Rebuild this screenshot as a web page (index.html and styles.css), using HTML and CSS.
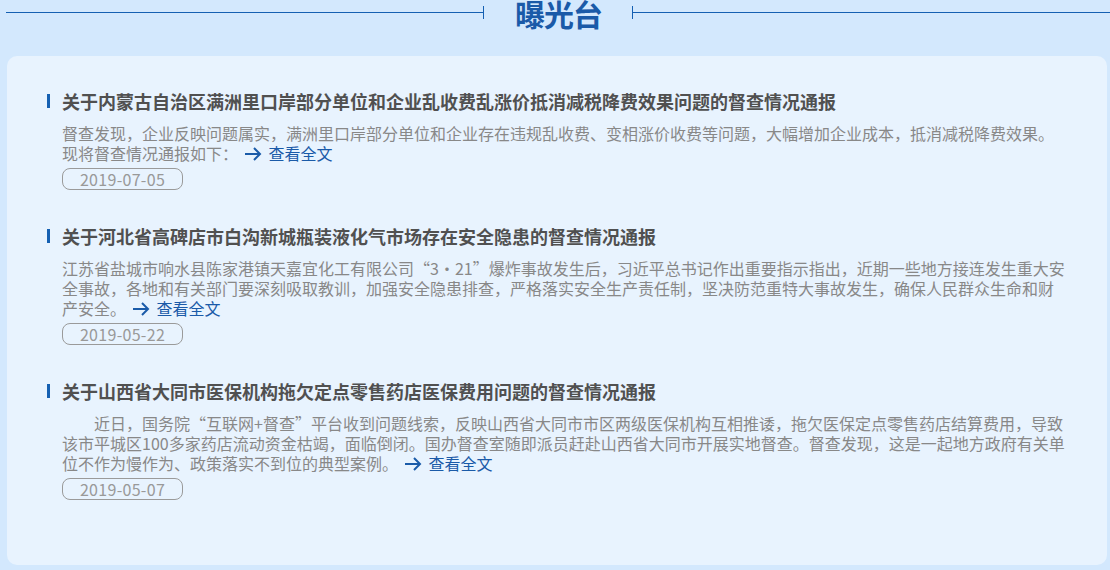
FILE: index.html
```html
<!DOCTYPE html>
<html lang="zh-CN">
<head>
<meta charset="utf-8">
<title>曝光台</title>
<link rel="stylesheet" href="styles.css">
</head>
<body>
<header class="head">
  <span class="rule rule-left"></span>
  <span class="tick"></span>
  <h1 class="head-title">曝光台</h1>
  <span class="tick"></span>
  <span class="rule rule-right"></span>
</header>
<main class="card">
  <article class="item">
    <h2 class="item-title"><span class="bar"></span>关于内蒙古自治区满洲里口岸部分单位和企业乱收费乱涨价抵消减税降费效果问题的督查情况通报</h2>
    <p class="item-body">督查发现，企业反映问题属实，满洲里口岸部分单位和企业存在违规乱收费、变相涨价收费等问题，大幅增加企业成本，抵消减税降费效果。现将督查情况通报如下： <a class="more" href="#"><svg class="arrow" viewBox="0 0 18 16" width="18" height="16"><path d="M1 8H16M10 2L16 8L10 14" fill="none" stroke="#1a5ba9" stroke-width="2"/></svg>查看全文</a></p>
    <div class="date">2019-07-05</div>
  </article>
  <article class="item">
    <h2 class="item-title"><span class="bar"></span>关于河北省高碑店市白沟新城瓶装液化气市场存在安全隐患的督查情况通报</h2>
    <p class="item-body">江苏省盐城市响水县陈家港镇天嘉宜化工有限公司“3·21”爆炸事故发生后，习近平总书记作出重要指示指出，近期一些地方接连发生重大安全事故，各地和有关部门要深刻吸取教训，加强安全隐患排查，严格落实安全生产责任制，坚决防范重特大事故发生，确保人民群众生命和财产安全。 <a class="more" href="#"><svg class="arrow" viewBox="0 0 18 16" width="18" height="16"><path d="M1 8H16M10 2L16 8L10 14" fill="none" stroke="#1a5ba9" stroke-width="2"/></svg>查看全文</a></p>
    <div class="date">2019-05-22</div>
  </article>
  <article class="item">
    <h2 class="item-title"><span class="bar"></span>关于山西省大同市医保机构拖欠定点零售药店医保费用问题的督查情况通报</h2>
    <p class="item-body indent">近日，国务院“互联网+督查”平台收到问题线索，反映山西省大同市市区两级医保机构互相推诿，拖欠医保定点零售药店结算费用，导致该市平城区100多家药店流动资金枯竭，面临倒闭。国办督查室随即派员赶赴山西省大同市开展实地督查。督查发现，这是一起地方政府有关单位不作为慢作为、政策落实不到位的典型案例。 <a class="more" href="#"><svg class="arrow" viewBox="0 0 18 16" width="18" height="16"><path d="M1 8H16M10 2L16 8L10 14" fill="none" stroke="#1a5ba9" stroke-width="2"/></svg>查看全文</a></p>
    <div class="date">2019-05-07</div>
  </article>
</main>
</body>
</html>
```

FILE: styles.css
```css
html, body {
  margin: 0;
  padding: 0;
}
body {
  background: #d3e8fd;
  font-family: "Microsoft YaHei", "Noto Sans CJK SC", "Noto Sans", sans-serif;
  width: 1110px;
  height: 570px;
  overflow: hidden;
}
.head {
  display: flex;
  align-items: flex-start;
  height: 26px;
  padding-left: 6px;
}
.rule {
  flex: 1;
  height: 1px;
  margin-top: 12px;
  background: #1560b2;
}
.tick {
  width: 1px;
  height: 13px;
  margin-top: 6px;
  background: #1560b2;
}
.head-title {
  margin: 0 30px 0 31px;
  font-size: 30px;
  line-height: 26px;
  font-weight: 700;
  color: #1a5aa8;
  letter-spacing: -1px;
}
.card {
  box-sizing: border-box;
  height: 509px;
  margin: 30px 3px 0 7px;
  padding: 35px 38px 0 40px;
  background: #e8f3fe;
  border-radius: 10px;
}
.item + .item {
  margin-top: 36px;
}
.item-title {
  display: flex;
  align-items: center;
  margin: 0;
  font-size: 18px;
  line-height: 20px;
  font-weight: 700;
  color: #505050;
  white-space: nowrap;
}
.bar {
  flex: none;
  width: 3px;
  height: 14px;
  margin-right: 12px;
  background: #1560b2;
}
.item-body {
  margin: 12px 0 0 15px;
  font-size: 16px;
  line-height: 20px;
  color: #888888;
}
.indent {
  text-indent: 2em;
}
.more {
  color: #1a5aa8;
  text-decoration: none;
  white-space: nowrap;
}
.arrow {
  display: inline-block;
  vertical-align: -2px;
  margin: 0 7px 0 2px;
}
.date {
  box-sizing: border-box;
  width: 121px;
  height: 22px;
  margin: 5px 0 0 15px;
  border: 1px solid #9a9a9a;
  border-radius: 8px;
  font-size: 16px;
  line-height: 20px;
  text-align: center;
  color: #999999;
  letter-spacing: 0.3px;
}
```
